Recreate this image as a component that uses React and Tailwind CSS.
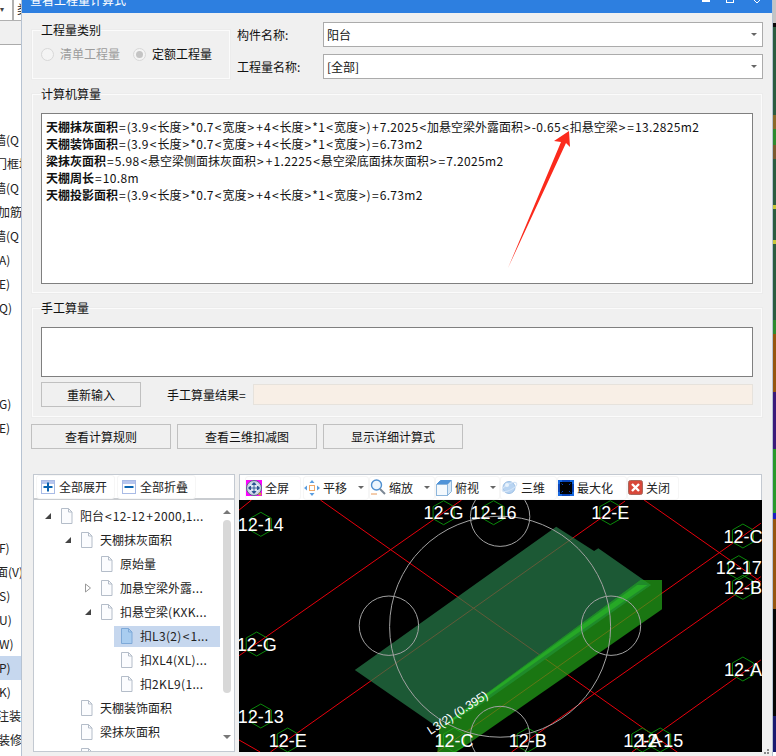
import React from "react";

// reference crop coords -> canvas coords
const cx = (x) => +(x / 2.904 - 3).toFixed(1);
const cy = (y) => +(y / 3 - 30).toFixed(1);
const pts = (list) => list.map(([x, y]) => `${cx(x)},${cy(y)}`).join(" ");

const sideRows = [
	["墙(Q", "ml-[-6px]"],
	["门框填", "ml-[-5px]"],
	["墙(Q", "ml-[-6px]"],
	["加筋墙", "ml-[-2px]"],
	["墙(Q", "ml-[-6px]"],
	["A)", "ml-[-1px]"],
	["E)", "ml-[-1px]"],
	["Q)", "ml-[-1px]"],
	["", ""],
	["", ""],
	["", ""],
	["G)", "ml-[-1px]"],
	["E)", "ml-[-1px]"],
	["", ""],
	["", ""],
	["", ""],
	["", ""],
	["F)", "ml-[-1px]"],
	["面(V)", "ml-[-4px]"],
	["S)", "ml-[-1px]"],
	["U)", "ml-[-1px]"],
	["W)", "ml-[-1px]"],
	["P)", "ml-[-1px]"],
	["K)", "ml-[-1px]"],
	["注装修", "ml-[-3px]"],
	["装修", "ml-[-2px]"],
];

const rightStrip = [
	"h-[23px] bg-[#c4c4c4]",
	"h-[4px] bg-[#0a0a0a]",
	"h-[88px] bg-[#2b5c40]",
	"h-[14px] bg-[#8a6a2a]",
	"h-[16px] bg-[#2e8a2e]",
	"h-[14px] bg-[#7a5a30]",
	"h-[46px] bg-[#2b5c40]",
	"h-[4px] bg-[#c8c83a]",
	"h-[31px] bg-[#2b5c40]",
	"h-[4px] bg-[#c8c83a]",
	"h-[76px] bg-[#2b5c40]",
	"h-[14px] bg-[#2e8a2e]",
	"h-[58px] bg-[#95560f]",
	"h-[57px] bg-[#3a1a7a]",
	"h-[64px] bg-[#2a982a]",
	"h-[6px] bg-[#1c1cc0]",
	"h-[90px] bg-[#95560f]",
	"h-[107px] bg-[#060606]",
	"h-[36px] bg-[#1a1a70]",
];

const treeRows = [
	{ label: "阳台<12-12+2000,1...", level: 0, arrow: "open" },
	{ label: "天棚抹灰面积", level: 1, arrow: "open" },
	{ label: "原始量", level: 2 },
	{ label: "加悬空梁外露...", level: 2, arrow: "closed" },
	{ label: "扣悬空梁(KXK...", level: 2, arrow: "open" },
	{ label: "扣L3(2)<1...", level: 3, selected: true },
	{ label: "扣XL4(XL)...", level: 3 },
	{ label: "扣2KL9(1...", level: 3 },
	{ label: "天棚装饰面积", level: 1 },
	{ label: "梁抹灰面积", level: 1 },
	{ label: "", level: 1 },
];

const levelPad = ["pl-[10px]", "pl-[30px]", "pl-[50px]", "pl-[70px]"];

const redLines = [
	[[245, 90], [1300, 860]],
	[[9, 557], [655, 90]],
	[[100, 846], [1130, 93]],
	[[585, 846], [1524, 160]],
	[[800, 846], [1524, 320]],
	[[1150, 846], [1524, 570]],
	[[1185, 90], [1524, 335]],
	[[9, 120], [45, 90]],
	[[9, 810], [70, 846]],
];

const circles = [
	[767, 470, 110.5],
	[767, 140, 29.7],
	[444, 467, 29.7],
	[1089, 467, 29.7],
	[767, 798, 29.7],
];

const gridLabels = [
	["12-14", 72, 163],
	["12-G", 603, 128],
	["12-16", 748, 128],
	["12-E", 1087, 128],
	["12-C", 1472, 198],
	["12-17", 1460, 293],
	["12-B", 1472, 352],
	["12-G", 60, 522],
	["12-A", 1472, 597],
	["12-13", 72, 738],
	["12-E", 150, 810],
	["12-C", 633, 810],
	["12-B", 847, 810],
	["12-A", 1180, 810],
	["12-15", 1232, 810],
];

// the dialog font sets operators and digits wider than Noto does
function Spaced({ text }) {
	const parts = [...text.matchAll(/[<>=+]|[\u4e00-\u9fff]+|[^\u4e00-\u9fff<>=+]+/g)].map((m) => m[0]);
	return parts.map((part, i) => {
		if (/^[<>=+]$/.test(part)) {
			return <span key={i} className="mx-[1px]">{part}</span>;
		}
		if (/^[\u4e00-\u9fff]/.test(part)) {
			return <span key={i}>{part}</span>;
		}
		return <span key={i} className="tracking-[0.35px]">{part}</span>;
	});
}

function Hex({ x, y }) {
	const r = 12;
	const w = 10.5;
	const a = cx(x);
	const b = cy(y);
	return (
		<polygon
			points={`${a},${b - r} ${a + w},${b - r / 2} ${a + w},${b + r / 2} ${a},${b + r} ${a - w},${b + r / 2} ${a - w},${b - r / 2}`}
			fill="none"
			stroke="#0a8a0a"
			strokeWidth="1"
		/>
	);
}

function Scene() {
	return (
		<svg width="523" height="252" viewBox="0 0 523 252" className="block bg-black">
			{redLines.map(([a, b]) => (
				<line
					key={`${a}-${b}`}
					x1={cx(a[0])}
					y1={cy(a[1])}
					x2={cx(b[0])}
					y2={cy(b[1])}
					stroke="#e8000c"
					strokeWidth="1"
				/>
			))}
			{gridLabels.map(([t, x, y]) => (
				<Hex key={`h${t}${x}`} x={x} y={y} />
			))}
			<polygon
				points={pts([[345, 600], [930, 170], [1040, 243], [1052, 235], [1205, 345], [590, 775]])}
				fill="#287f4b"
				fillOpacity="0.7"
			/>
			<polygon
				points={pts([[1175, 330], [1237, 330], [1237, 418], [640, 846], [585, 846], [590, 775]])}
				fill="#25a81a"
				fillOpacity="0.7"
			/>
			<polygon
				points={pts([[1175, 330], [1205, 345], [700, 712], [590, 775]])}
				fill="#1f8a2a"
			/>
			<polygon
				points={pts([[1165, 345], [1195, 345], [900, 555], [640, 745], [612, 758]])}
				fill="#26a826"
			/>
			{circles.map(([x, y, r]) => (
				<circle
					key={`${x}-${y}`}
					cx={cx(x)}
					cy={cy(y)}
					r={r}
					fill="none"
					stroke="#a2a2a2"
					strokeWidth="1"
				/>
			))}
			<text
				x={cx(565)}
				y={cy(795)}
				fill="#fff"
				fontSize="12"
				transform={`rotate(-33 ${cx(565)} ${cy(795)})`}
				className="font-['Liberation_Sans',sans-serif]"
			>
				L3(2) (0.395)
			</text>
			{gridLabels.map(([t, x, y]) => (
				<text
					key={`t${t}${x}`}
					x={cx(x)}
					y={cy(y) + 6.5}
					fill="#fff"
					fontSize="18"
					textAnchor="middle"
					className="font-['Liberation_Sans',sans-serif]"
				>
					{t}
				</text>
			))}
		</svg>
	);
}

function FileIcon({ blue }) {
	return (
		<svg width="13" height="16" viewBox="0 0 13 16" className="shrink-0">
			<path
				d="M1.5 .5h7l3.5 3.5v11.5h-10.5z"
				fill={blue ? "#a9cdf0" : "#fbfcfe"}
				stroke={blue ? "#7ea9d8" : "#b4bdc9"}
			/>
			<path d="M8.5 .5v3.5h3.5" fill="none" stroke={blue ? "#7ea9d8" : "#b4bdc9"} />
		</svg>
	);
}

function TreeArrow({ type }) {
	if (type === "open") {
		return (
			<svg width="8" height="8" viewBox="0 0 8 8" className="shrink-0">
				<path d="M7 1v6h-6z" fill="#444" />
			</svg>
		);
	}
	if (type === "closed") {
		return (
			<svg width="8" height="10" viewBox="0 0 8 10" className="shrink-0">
				<path d="M1.5 1l5 4-5 4z" fill="#fff" stroke="#999" />
			</svg>
		);
	}
	return <span className="w-[8px] shrink-0" />;
}

function Fieldset({ title, className, children }) {
	return (
		<fieldset className={`border border-[#fbfbfb] shadow-[0_0_0_1px_#ececec] ${className}`}>
			<legend className="ml-[8px] h-[16px] leading-[16px] text-[12px] text-[#111]">{title}</legend>
			{children}
		</fieldset>
	);
}

function Combo({ value }) {
	return (
		<div className="flex items-center justify-between h-[25px] w-[440px] bg-white border border-[#ababab] pl-[3px] pr-[3px]">
			<span className="text-[12px]">{value}</span>
			<span className="w-0 h-0 border-x-[3px] border-t-[3px] border-x-transparent border-t-[#666] mr-[2px]" />
		</div>
	);
}

function Radio({ checked, disabled }) {
	return (
		<span className="flex items-center justify-center w-[13px] h-[13px] rounded-full border border-[#d8d8d8] bg-[#f4f4f4] shrink-0">
			{checked && <span className={`w-[7px] h-[7px] rounded-full ${disabled ? "bg-[#c0c0c0]" : "bg-[#c4c4c4]"}`} />}
		</span>
	);
}

function GrayButton({ children, className }) {
	return (
		<button className={`h-[25px] border border-[#c0c0c0] bg-[#f0f0f0] text-[12px] text-[#111] ${className}`}>
			{children}
		</button>
	);
}

function SquareIcon({ minus }) {
	return (
		<svg width="14" height="14" viewBox="0 0 14 14" className="shrink-0 mr-[1px]">
			<rect x=".5" y=".5" width="13" height="13" fill="#fff" stroke="#a9bbe6" />
			<rect x="1" y="1" width="12" height="3" fill="#b8c6ee" />
			<rect x="2.5" y="6" width="9" height="2" fill="#0a63b0" />
			{!minus && <rect x="6" y="2.5" width="2" height="9" fill="#0a63b0" />}
		</svg>
	);
}

function FullIcon() {
	return (
		<svg width="16" height="16" viewBox="0 0 16 16" className="shrink-0">
			<rect width="16" height="16" fill="#f0f" />
			<circle cx="8" cy="8" r="7.5" fill="#c8d2e4" stroke="#5a6a8a" />
			<circle cx="8" cy="8" r="5.5" fill="#dfe6f2" />
			<path d="M8 3v10M3 8h10M8 2.5l-2 2h4zM8 13.5l-2-2h4zM2.5 8l2-2v4zM13.5 8l-2-2v4z" stroke="#1e4a8a" fill="#1e4a8a" strokeWidth=".8" />
			<circle cx="14" cy="14" r="1.6" fill="#c9a030" />
		</svg>
	);
}

function PanIcon() {
	return (
		<svg width="16" height="16" viewBox="0 0 16 16" className="shrink-0">
			<rect x="5.5" y="5.5" width="5" height="5" fill="#fff" stroke="#f0a868" />
			<path d="M8 0l2.5 3h-5zM8 16l2.5-3h-5zM0 8l3-2.5v5zM16 8l-3-2.5v5z" fill="#5b9ee0" />
		</svg>
	);
}

function ZoomIcon() {
	return (
		<svg width="16" height="17" viewBox="0 0 16 17" className="shrink-0">
			<circle cx="6.5" cy="6" r="5" fill="#eef6fd" stroke="#4f8fd0" strokeWidth="1.4" />
			<path d="M10 10l5 5" stroke="#7b8794" strokeWidth="2" />
			<path d="M1 15h6" stroke="#e89a5a" />
		</svg>
	);
}

function TopViewIcon() {
	return (
		<svg width="16" height="16" viewBox="0 0 16 16" className="shrink-0">
			<path d="M.5 4.5l4-4h11l-4 4z" fill="#4f93d8" stroke="#4f93d8" />
			<path d="M11.5 4.5l4-4v11l-4 4z" fill="#d8e8f6" stroke="#8db6dc" />
			<rect x=".5" y="4.5" width="11" height="11" fill="#f4f9fd" stroke="#8db6dc" />
		</svg>
	);
}

function OrbitIcon() {
	return (
		<svg width="17" height="15" viewBox="0 0 17 15" className="shrink-0">
			<circle cx="8" cy="7.5" r="6" fill="#b8d4f2" stroke="#9cbfe4" />
			<ellipse cx="8.5" cy="7" rx="8" ry="3" fill="none" stroke="#d4e4f6" transform="rotate(-28 8.5 7)" />
			<circle cx="6" cy="5" r="2" fill="#e8f2fc" />
		</svg>
	);
}

function MaxIcon() {
	return (
		<svg width="16" height="16" viewBox="0 0 16 16" className="shrink-0">
			<rect x="1" y="1" width="14" height="14" fill="#000" stroke="#0a45b8" strokeWidth="2" />
			<path d="M0 0h4v2h-2v2h-2zM16 0h-4v2h2v2h2zM0 16h4v-2h-2v-2h-2zM16 16h-4v-2h2v-2h2z" fill="#1668e0" />
			<path d="M3.5 3.5l1.5 1.5M12.5 3.5l-1.5 1.5M3.5 12.5l1.5-1.5M12.5 12.5l-1.5-1.5" stroke="#0a45b8" />
		</svg>
	);
}

function CloseIcon() {
	return (
		<svg width="15" height="15" viewBox="0 0 15 15" className="shrink-0">
			<rect x=".5" y=".5" width="14" height="14" rx="2" fill="#d8483a" stroke="#a8685c" />
			<path d="M4 4l7 7M11 4l-7 7" stroke="#fff" strokeWidth="2.4" />
		</svg>
	);
}

function Caret() {
	return <span className="ml-[8px] w-0 h-0 border-x-[3px] border-t-[3px] border-x-transparent border-t-[#666]" />;
}

function ToolItem({ icon, label, caret, className }) {
	return (
		<div className={`flex items-center gap-[3px] h-[24px] rounded-[3px] border border-[#f6f6f6] ${className}`}>
			{icon}
			<span className="text-[12px] text-[#222] whitespace-nowrap">{label}</span>
			{caret && <Caret />}
		</div>
	);
}

function App() {
	return (
		<div className="relative flex w-[776px] h-[756px] overflow-hidden bg-white text-[#111] font-['Noto_Sans_CJK_SC','Noto_Sans',sans-serif]">
			{/* main window behind the dialog */}
			<div className="w-[21px] shrink-0 flex flex-col overflow-hidden">
				<div className="flex h-[21px] shrink-0">
					<div className="w-[13px] h-[21px] bg-white border-r border-b border-[#b0b0b0] text-[8px] leading-[18px] text-[#444]">▾</div>
					<div className="w-[8px] h-[21px] bg-white border-l border-b border-[#b0b0b0] pl-[3px] text-[12px] leading-[18px] overflow-hidden">类</div>
				</div>
				<div className="h-[24px] shrink-0 bg-[#f0f0f0] border-b border-[#ababab]" />
				<div className="h-[83px] shrink-0" />
				{sideRows.map(([text, offset], i) => (
					<div
						key={i}
						className={`flex items-center h-[24px] shrink-0 overflow-hidden whitespace-nowrap text-[12px] text-[#222] ${text === "P)" ? "bg-[#c6d7ee]" : ""}`}
					>
						<span className={offset}>{text}</span>
					</div>
				))}
			</div>

			{/* dialog */}
			<div className="relative w-[752px] shrink-0 flex flex-col bg-[#f0f0f0] border-x border-[#b7c3d2]">
				<div className="flex items-center justify-between h-[13px] shrink-0 overflow-hidden bg-[#2d7fe0] pl-[8px] pr-[10px]">
					<span className="text-[12px] leading-[16px] text-white mt-[-14px]">查看工程量计算式</span>
					<div className="flex items-start self-start text-white">
						<span className="block w-[8px] h-[2px] bg-white mr-[16px]" />
						<span className="block w-[8px] h-[3px] border-x border-b border-white mr-[18px]" />
						<svg width="10" height="4" viewBox="0 0 10 4">
							<path d="M2 0l3 3 3-3" stroke="#fff" fill="none" />
						</svg>
					</div>
				</div>

				<div className="flex pl-[10px] mt-[9px]">
					<Fieldset title="工程量类别" className="w-[198px] h-[57px] pt-[4px]">
						<div className="flex items-center text-[12px] pl-[8px] h-[24px]">
							<Radio disabled />
							<span className="ml-[6px] text-[#9c9c9c]">清单工程量</span>
							<span className="ml-[13px]"><Radio checked /></span>
							<span className="ml-[6px]">定额工程量</span>
						</div>
					</Fieldset>
					<div className="flex flex-col gap-[7px] ml-[7px]">
						<div className="flex items-center">
							<span className="w-[86px] text-[12px]">构件名称:</span>
							<Combo value="阳台" />
						</div>
						<div className="flex items-center">
							<span className="w-[86px] text-[12px]">工程量名称:</span>
							<Combo value="[全部]" />
						</div>
					</div>
				</div>

				<Fieldset title="计算机算量" className="ml-[10px] mt-[7px] w-[730px] h-[207px]">
					<div className="w-[712px] h-[171px] ml-[8px] mt-[11px] bg-white border border-[#7f7f7f] pl-[4px] pt-[4px] text-[12px] leading-[17px] whitespace-nowrap">
						<div><b>天棚抹灰面积</b><Spaced text="=(3.9<长度>*0.7<宽度>+4<长度>*1<宽度>)+7.2025<加悬空梁外露面积>-0.65<扣悬空梁>=13.2825m2" /></div>
						<div><b>天棚装饰面积</b><Spaced text="=(3.9<长度>*0.7<宽度>+4<长度>*1<宽度>)=6.73m2" /></div>
						<div><b>梁抹灰面积</b><Spaced text="=5.98<悬空梁侧面抹灰面积>+1.2225<悬空梁底面抹灰面积>=7.2025m2" /></div>
						<div><b>天棚周长</b><Spaced text="=10.8m" /></div>
						<div><b>天棚投影面积</b><Spaced text="=(3.9<长度>*0.7<宽度>+4<长度>*1<宽度>)=6.73m2" /></div>
					</div>
				</Fieldset>

				<Fieldset title="手工算量" className="ml-[10px] mt-[7px] w-[730px] h-[117px]">
					<div className="w-[712px] h-[50px] ml-[8px] mt-[11px] bg-white border border-[#7f7f7f]" />
					<div className="flex items-center ml-[8px] mt-[5px]">
						<GrayButton className="w-[100px]">重新输入</GrayButton>
						<span className="ml-[26px] w-[86px] text-[12px]">手工算量结果=</span>
						<div className="w-[500px] h-[21px] bg-[#f8efe6] border border-[#e6e2dc]" />
					</div>
				</Fieldset>

				<div className="flex gap-[6px] ml-[9px] mt-[7px]">
					<GrayButton className="w-[140px]">查看计算规则</GrayButton>
					<GrayButton className="w-[140px]">查看三维扣减图</GrayButton>
					<GrayButton className="w-[140px]">显示详细计算式</GrayButton>
				</div>

				<div className="flex gap-[4px] ml-[11px] mt-[25px] h-[278px]">
					{/* tree */}
					<div className="flex flex-col w-[202px] border border-[#c3c9d1] bg-white">
						<div className="flex items-center gap-[2px] h-[25px] shrink-0 border-b-2 border-[#c9ccd0] pl-[2px]">
							<ToolItem icon={<SquareIcon />} label="全部展开" className="pl-[4px] pr-[4px] w-[79px]" />
							<ToolItem icon={<SquareIcon minus />} label="全部折叠" className="pl-[4px] pr-[4px] w-[79px]" />
						</div>
						<div className="flex flex-1 min-h-0 overflow-hidden">
							<div className="flex-1 pt-[4px] min-w-0">
								{treeRows.map((row, i) => (
									<div key={i} className={`flex items-center h-[24px] ${levelPad[row.level]}`}>
										<TreeArrow type={row.arrow} />
										<div className={`flex items-center h-[21px] pl-[6px] ml-[2px] gap-[7px] whitespace-nowrap text-[12px] text-[#222] ${row.selected ? "bg-[#c6d7ee] w-[106px]" : ""}`}>
											<FileIcon blue={row.selected} />
											<span><Spaced text={row.label} /></span>
										</div>
									</div>
								))}
							</div>
							<div className="flex flex-col items-center w-[13px] shrink-0 mr-[1px] pt-[10px]">
								<span className="w-0 h-0 border-x-[4px] border-b-[4px] border-x-transparent border-b-[#777]" />
								<span className="block w-[8px] h-[173px] mt-[6px] rounded-[4px] bg-[#d8d8d8]" />
								<span className="w-0 h-0 mt-[42px] border-x-[4px] border-t-[4px] border-x-transparent border-t-[#777]" />
							</div>
						</div>
					</div>

					{/* 3d view */}
					<div className="flex flex-col w-[523px]">
						<div className="flex items-center h-[26px] shrink-0 bg-white border border-b-0 border-[#c3c9d1] pl-[5px]">
							<ToolItem icon={<FullIcon />} label="全屏" className="w-[56px]" />
							<ToolItem icon={<PanIcon />} label="平移" caret className="w-[66px] ml-[2px]" />
							<ToolItem icon={<ZoomIcon />} label="缩放" caret className="w-[66px]" />
							<ToolItem icon={<TopViewIcon />} label="俯视" caret className="w-[65px]" />
							<ToolItem icon={<OrbitIcon />} label="三维" className="w-[57px]" />
							<ToolItem icon={<MaxIcon />} label="最大化" className="w-[70px]" />
							<ToolItem icon={<CloseIcon />} label="关闭" className="w-[52px]" />
						</div>
						<Scene />
					</div>
				</div>

				{/* resize grip */}
				<svg width="8" height="8" viewBox="0 0 8 8" className="absolute right-[2px] bottom-0">
					<path d="M5 1h2v2h-2zM2 4h2v2h-2zM5 4h2v2h-2z" fill="#8a8a8a" />
				</svg>
			</div>

			{/* whatever the dialog leaves uncovered on the right */}
			<div className="w-[3px] shrink-0 flex flex-col">
				{rightStrip.map((c) => (
					<div key={c} className={c} />
				))}
			</div>

			{/* red arrow marked on the screenshot */}
			<svg width="776" height="756" className="absolute left-0 top-0 pointer-events-none">
				<polygon points="508,268 561,142 554,141 569,131 570,147 566,143" fill="#fb2a1c" />
			</svg>
		</div>
	);
}

export default App;
